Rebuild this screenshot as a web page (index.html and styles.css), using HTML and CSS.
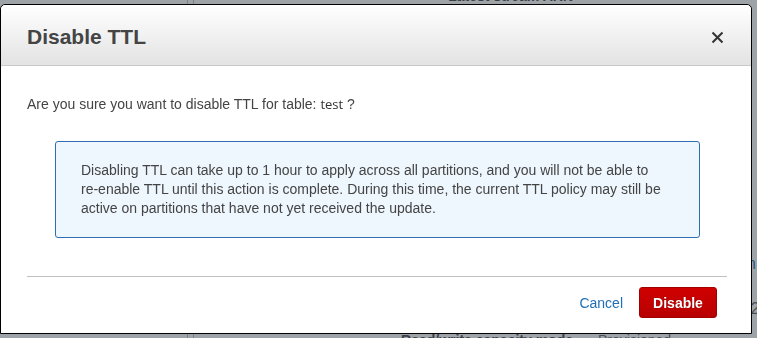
FILE: index.html
```html
<!DOCTYPE html>
<html lang="en">
  <head>
    <meta charset="UTF-8" />
    <meta name="viewport" content="width=device-width, initial-scale=1.0" />
    <title>Disable TTL</title>
    <link rel="stylesheet" href="styles.css">
  </head>
  <body>
    <div class="page">
      <div class="side"></div>
      <div class="split"></div>
      <div class="main">
        <div class="detail-row top-row">
          <span class="label">Latest stream ARN</span>
          <span class="value"></span>
        </div>
        <div class="detail-row mid-row">
          <span class="label"></span>
          <span class="value link">Manage Stream</span>
        </div>
        <div class="detail-row mid-row2">
          <span class="label"></span>
          <span class="value region">us-east-2</span>
        </div>
        <div class="detail-row">
          <span class="label">Read/write capacity mode</span>
          <span class="value">Provisioned</span>
        </div>
      </div>
    </div>

    <div class="modal">
      <div class="modal-header">
        <h2 class="modal-title">Disable TTL</h2>
        <button class="close" aria-label="Close">
          <svg width="13" height="13" viewBox="0 0 13 13">
            <path d="M1.5 1.5 L11.5 11.5 M11.5 1.5 L1.5 11.5" stroke="#333" stroke-width="2" fill="none" />
          </svg>
        </button>
      </div>
      <div class="modal-body">
        <p class="question">Are you sure you want to disable TTL for table: <span class="table-name">test</span> ?</p>
        <div class="info-box">
          Disabling TTL can take up to 1 hour to apply across all partitions, and you will not be able to<br>
          re-enable TTL until this action is complete. During this time, the current TTL policy may still be<br>
          active on partitions that have not yet received the update.
        </div>
      </div>
      <div class="modal-footer">
        <a class="cancel" href="#">Cancel</a>
        <button class="btn-disable">Disable</button>
      </div>
    </div>
  </body>
</html>
```

FILE: styles.css
```css
html, body {
  margin: 0;
  height: 100%;
  background-color: #9ea3a8;
}
body {
  font-family: "Liberation Sans", Arial, sans-serif;
  overflow: hidden;
}

/* page behind the dialog, dimmed */
.page {
  display: flex;
  height: 338px;
  overflow: hidden;
  background-color: #9ea3a8;
}
.side {
  width: 187px;
  flex-shrink: 0;
  border-right: 1px solid #7c8186;
}
.split {
  width: 5px;
  flex-shrink: 0;
  border-right: 1px solid #7c8186;
}
.main {
  flex: 1;
  min-width: 0;
  margin-top: -12px;
}
.detail-row {
  display: grid;
  grid-template-columns: 379px 1fr;
  column-gap: 25px;
  font-size: 14px;
  line-height: 16px;
  color: #3b4046;
  white-space: nowrap;
}
.label {
  text-align: right;
  font-weight: bold;
}
.value {
  color: #4a5056;
}
.top-row {
  margin-bottom: 252px;
}
.mid-row {
  margin-bottom: 29px;
}
.mid-row2 {
  margin-bottom: 15px;
}
.link {
  color: #2c5a85;
  padding-left: 44px;
  font-size: 16px;
}
.region {
  padding-left: 95px;
  font-size: 16px;
}

/* dialog */
.modal {
  position: fixed;
  left: 0;
  top: 4px;
  width: 750px;
  height: 328px;
  border: 1px solid #000;
  border-radius: 5px 5px 0 0;
  background: #fff;
  display: flex;
  flex-direction: column;
}
.modal-header {
  height: 60px;
  flex-shrink: 0;
  border-bottom: 1px solid #c8c8c8;
  border-radius: 5px 5px 0 0;
  background: linear-gradient(#fff, #e3e3e3);
  display: flex;
  align-items: center;
  justify-content: space-between;
  padding: 0 27px 0 26px;
}
.modal-title {
  margin: 0;
  font-size: 21px;
  font-weight: bold;
  color: #444;
  padding-top: 3px;
}
.close {
  border: 0;
  background: none;
  padding: 0;
  margin-top: 4px;
  width: 13px;
  height: 13px;
  display: flex;
  cursor: pointer;
}
.modal-body {
  padding: 30px 24px 0 26px;
}
.question {
  margin: 0 0 29px;
  font-size: 14px;
  line-height: 16px;
  color: #444;
}
.table-name {
  color: #333;
  font-family: "Open Sans", sans-serif;
  font-size: 13px;
}
.info-box {
  margin: 0 27px 0 28px;
  border: 1px solid #2f6db3;
  border-radius: 3px;
  background: #eff7fe;
  padding: 19px 20px 19px 25px;
  font-size: 14px;
  line-height: 19px;
  color: #444;
  white-space: nowrap;
}
.modal-footer {
  margin: 38px 24px 0 26px;
  border-top: 1px solid #c0c0c0;
  display: flex;
  justify-content: flex-end;
  align-items: center;
  gap: 16px;
  padding: 10px 10px 0 0;
}
.cancel {
  color: #1f6fb6;
  text-decoration: none;
  font-size: 14px;
}
.btn-disable {
  width: 78px;
  height: 31px;
  border: 1px solid #a00000;
  border-radius: 3px;
  background: linear-gradient(#d00000, #b80000);
  color: #fff;
  font-family: "Liberation Sans", Arial, sans-serif;
  font-size: 14px;
  font-weight: bold;
  text-shadow: 0 0 1px #600;
  padding: 0;
}
```
